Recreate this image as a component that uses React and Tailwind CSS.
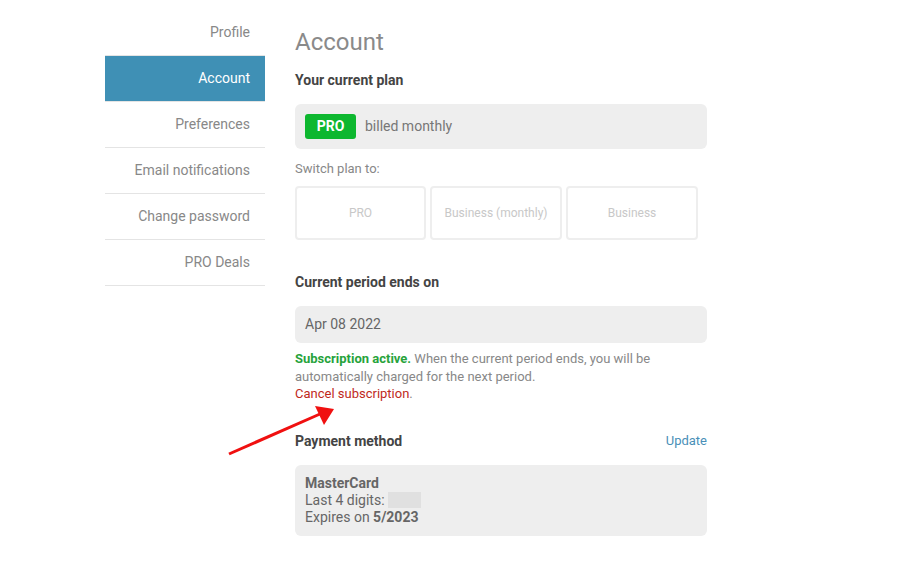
import React from 'react';

const navItems = ['Profile', 'Account', 'Preferences', 'Email notifications', 'Change password', 'PRO Deals'];

export default function App() {
  return (
    <div className="relative w-[900px] h-[576px] bg-white text-[14px] text-[#555]" style={{ fontFamily: 'Roboto, "Liberation Sans", sans-serif' }}>
      <div className="flex pl-[105px] pt-[10px]">
        {/* Sidebar */}
        <div className="w-[160px] shrink-0">
          {navItems.map((item) => (
            <div
              key={item}
              className={`h-[46px] flex items-center justify-end pr-[15px] border-b border-[#e4e4e4] ${
                item === 'Account' ? 'bg-[#3f90b5] text-white' : 'text-[#888]'
              }`}
            >
              {item}
            </div>
          ))}
        </div>

        {/* Main */}
        <div className="ml-[30px] w-[412px] pt-[16px]">
          <h1 className="text-[24px] leading-[32px] text-[#8a8a8a]">Account</h1>
          <h2 className="mt-[12px] font-bold text-[#444] leading-[20px]">Your current plan</h2>

          <div className="mt-[14px] h-[45px] rounded-md bg-[#eee] flex items-center px-[10px]">
            <span className="h-[25px] w-[51px] rounded-[3px] bg-[#0db72f] text-white font-bold flex items-center justify-center">PRO</span>
            <span className="ml-[9px] text-[#777]">billed monthly</span>
          </div>

          <div className="mt-[12px] text-[13px] text-[#888] leading-[16px]">Switch plan to:</div>
          <div className="mt-[9px] flex gap-[4px]">
            {['PRO', 'Business (monthly)', 'Business'].map((p, i) => (
              <div
                key={p}
                className={`${i === 0 ? 'w-[131px]' : 'w-[132px]'} h-[54px] border-2 border-[#eee] rounded-[4px] flex items-center justify-center text-[12px] text-[#c8c8c8]`}
              >
                {p}
              </div>
            ))}
          </div>

          <h2 className="mt-[32px] font-bold text-[#444] leading-[20px]">Current period ends on</h2>
          <div className="mt-[14px] h-[37px] rounded-md bg-[#eee] flex items-center px-[10px] text-[#666]">Apr 08 2022</div>

          <p className="mt-[7px] text-[13px] leading-[17.5px] text-[#888]">
            <span className="font-bold text-[#27a33b]">Subscription active.</span> When the current period ends, you will be automatically charged for the next period.
            <br />
            <span className="text-[#c0291c]">Cancel subscription</span>.
          </p>

          <div className="mt-[28px] flex items-center justify-between">
            <h2 className="font-bold text-[#444] leading-[20px]">Payment method</h2>
            <span className="text-[13px] text-[#4a8fb8]">Update</span>
          </div>

          <div className="mt-[14px] rounded-md bg-[#eee] px-[10px] py-[10px] text-[#666] leading-[17px]">
            <div className="font-bold">MasterCard</div>
            <div className="flex items-center">
              Last 4 digits:&nbsp;
              <span className="inline-block w-[33px] h-[16px] bg-[#e0e0e0]" />
            </div>
            <div>
              Expires on <span className="font-bold">5/2023</span>
            </div>
          </div>
        </div>
      </div>

      {/* annotation arrow */}
      <svg className="absolute left-0 top-0" width="900" height="576" viewBox="0 0 900 576">
        <line x1="229" y1="454" x2="320" y2="414" stroke="#f01010" strokeWidth="3" />
        <polygon points="334,409 315,406 324,425" fill="#f01010" />
      </svg>
    </div>
  );
}
